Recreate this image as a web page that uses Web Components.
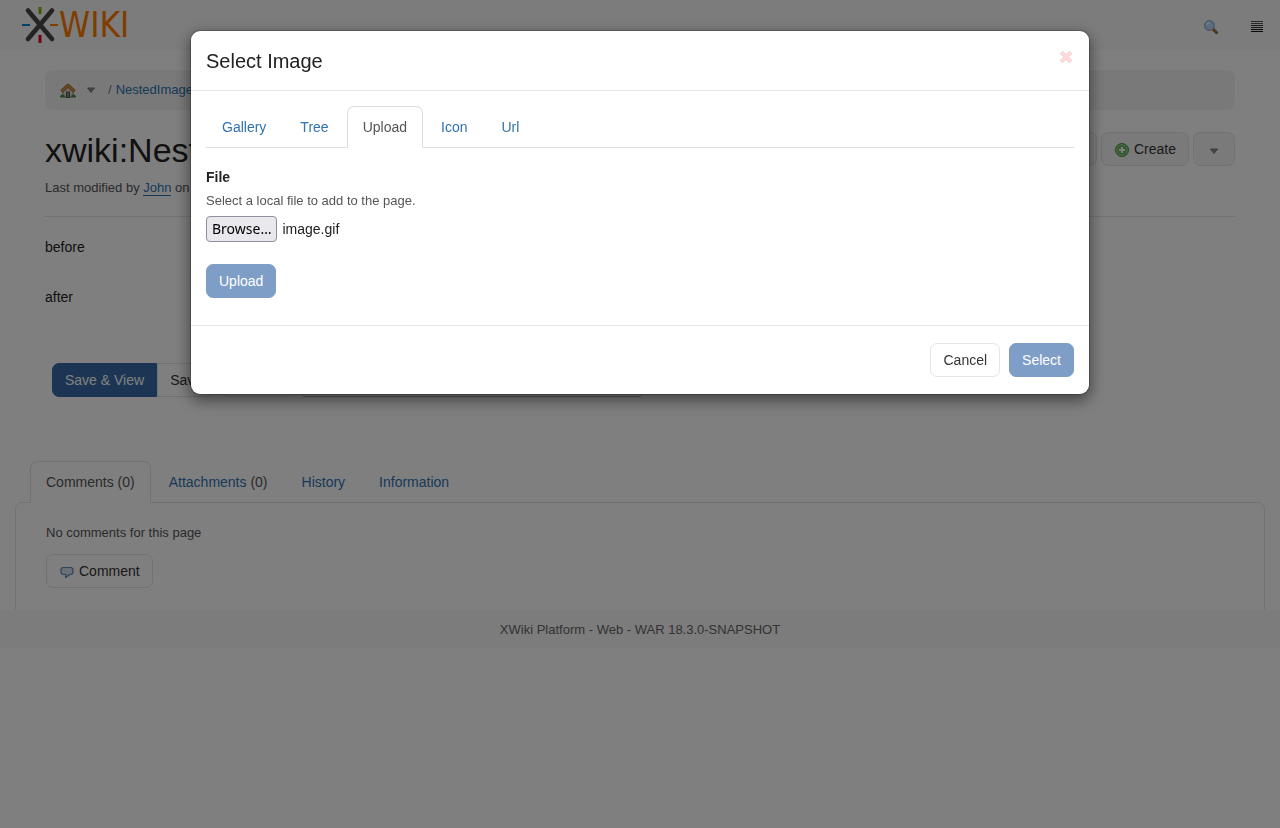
<!DOCTYPE html>
<html lang="en">
<head>
<meta charset="utf-8">
<meta name="viewport" content="width=device-width, initial-scale=1">
<title>Select Image - XWiki</title>
<style>
  :root {
    --text: #222;
    --muted: #555;
    --link: #2f73b1;
    --primary: #3a6ba9;
    --border: #e5e5e5;
  }
  body {
    margin: 0;
    background: #fff;
    color: var(--text);
    font: 14px/20px "Liberation Sans", Arial, sans-serif;
  }
</style>
</head>
<body>
<xwiki-page></xwiki-page>

<script type="module">
const ICONS = {
  search: `<svg width="16" height="16" viewBox="0 0 16 16">
    <path d="M10 10l3.500 3.500" stroke="#8a5a2a" stroke-width="3" stroke-linecap="round"/>
    <path d="M10.800 10.200l3 3" stroke="#e0a868" stroke-width="1"/>
    <circle cx="6.500" cy="6.500" r="4.800" fill="#b9d8f5" stroke="#8ea9cc" stroke-width="1.200"/>
    <path d="M4 6a3 3 0 0 1 3-2.500" stroke="#eef7ff" stroke-width="1.400" fill="none"/></svg>`,
  menu: `<svg width="12" height="12" viewBox="0 0 12 12" shape-rendering="crispEdges">
    <path d="M0 .5h12M0 2.500h12" stroke="#555"/>
    <path d="M0 4.500h12M0 6.500h12" stroke="#333"/>
    <path d="M0 8.500h12M0 10.500h12" stroke="#111"/></svg>`,
  home: `<svg width="16" height="16" viewBox="0 0 16 16">
    <path d="M3 8l5-5 5 5v6H3z" fill="#ddd8cf" stroke="#8d8578"/>
    <path d="M1.500 8.500L8 2.500l6.500 6" fill="none" stroke="#8e5a1b" stroke-width="3.400" stroke-linejoin="round"/>
    <path d="M1.500 8.500L8 2.500l6.500 6" fill="none" stroke="#d59a4c" stroke-width="1.800"/>
    <rect x="6.500" y="9" width="3" height="5.500" fill="#888" stroke="#555"/>
    <path d="M0 14.500q0-3 2.500-3t2.500 3zM11 14.500q0-3 2.500-3t2.500 3z" fill="#4d8a44"/></svg>`,
  caret: `<svg width="10" height="7" viewBox="0 0 10 7">
    <path d="M1.500 1h7L5 5.500z" fill="#909090" stroke="#777" stroke-linejoin="round"/></svg>`,
  add: `<svg width="16" height="16" viewBox="0 0 16 16">
    <circle cx="8" cy="8" r="6.500" fill="#6bb35c" stroke="#4a8f43"/>
    <circle cx="8" cy="8" r="5.300" fill="none" stroke="#a9d6a0"/>
    <path d="M8 5v6M5 8h6" stroke="#fff" stroke-width="2"/></svg>`,
  comment: `<svg width="16" height="16" viewBox="0 0 16 16">
    <path d="M4.500 3.500h7q2.500 0 2.500 2.300v2q0 2.700-3 2.700L6.500 13.500l.5-3H4.500Q2 10.500 2 8V5.800Q2 3.500 4.500 3.500z" fill="#d6e0f0" stroke="#5c86bb" stroke-width="1.200" stroke-linejoin="round"/></svg>`,
  close: `<svg width="16" height="16" viewBox="0 0 16 16">
    <path d="M4.500 4.500l7 7M11.500 4.500l-7 7" stroke="#fad0d0" stroke-width="4" stroke-linecap="square"/>
    <path d="M4.500 4.500l7 7M11.500 4.500l-7 7" stroke="#fcdcdc" stroke-width="2.400" stroke-linecap="square"/></svg>`
};

/** Small helper: open shadow root filled with the given markup. */
class BaseElement extends HTMLElement {
  constructor() {
    super();
    this.attachShadow({mode: "open"}).innerHTML = this.template();
  }
}

class XwIcon extends HTMLElement {
  constructor() {
    super();
    this.attachShadow({mode: "open"});
  }

  connectedCallback() {
    this.shadowRoot.innerHTML = `
    <style>
    :host { display: inline-flex; flex: none; }
    svg { display: block; }
    </style>
    ${ICONS[this.getAttribute("name")] || ""}`;
  }
}
customElements.define("xw-icon", XwIcon);

/** Button with the variants "primary", "toolbar" and the plain default. */
class XwButton extends HTMLElement {
  constructor() {
    super();
    this.attachShadow({mode: "open"});
  }

  connectedCallback() {
    const label = this.getAttribute("label");
    this.shadowRoot.innerHTML = `
    <style>
    :host { display: inline-flex; }
    button {
      display: inline-flex;
      align-items: center;
      gap: 4px;
      min-height: 34px;
      padding: 6px 12px;
      border: 1px solid var(--border);
      border-radius: var(--button-radius, 7px);
      background: #fff;
      color: #333;
      font: inherit;
      white-space: nowrap;
      cursor: pointer;
    }
    :host([variant=primary]) button {
      background: var(--primary);
      border-color: var(--primary);
      color: #fff;
    }
    :host([variant=toolbar]) button { background: #f5f5f5; }
    button:disabled { opacity: .65; cursor: not-allowed; }
    ::slotted(xw-icon) { margin-top: 2px; }
    </style>
    <button type="button" ${this.hasAttribute("disabled") ? "disabled" : ""} ${label ? `aria-label="${label}"` : ""}><slot></slot></button>`;
  }
}
customElements.define("xw-button", XwButton);

class XwTab extends BaseElement {
  template() {
    return `
    <style>
    :host { display: block; margin-bottom: -1px; }
    a {
      display: block;
      padding: 10px 15px;
      border: 1px solid transparent;
      border-radius: 7px 7px 0 0;
      color: var(--link);
      text-decoration: none;
    }
    :host([active]) a {
      border-color: var(--tab-border, #ddd);
      border-bottom-color: #fff;
      background: #fff;
      color: var(--muted);
    }
    ::slotted(span) { color: var(--muted); }
    </style>
    <a href="#"><slot></slot></a>`;
  }
}
customElements.define("xw-tab", XwTab);

class XwTabs extends BaseElement {
  template() {
    return `
    <style>
    :host {
      display: flex;
      gap: 2px;
      border-bottom: 1px solid var(--tab-border, #ddd);
    }
    </style>
    <slot></slot>`;
  }
}
customElements.define("xw-tabs", XwTabs);

class XwLogo extends BaseElement {
  template() {
    return `
    <style>
    a {
      display: flex;
      align-items: center;
      color: #ff7a00;
      font: 35px/36px "DejaVu Sans Condensed", "Liberation Sans", sans-serif;
      text-decoration: none;
    }
    </style>
    <a href="#">
      <svg width="37" height="38" viewBox="0 0 37 38" fill="none" stroke-linecap="round">
        <path d="M6 4.500L30 33M30 4.500L6 33" stroke="#484848" stroke-width="4.600"/>
        <g stroke-width="3" stroke-linecap="butt">
          <path d="M18 1v7" stroke="#7ab800"/>
          <path d="M18 29v8" stroke="#e4002b"/>
          <path d="M0 19h8" stroke="#0085ca" stroke-width="2"/>
          <path d="M28 19h8" stroke="#ff7a00" stroke-width="2"/>
        </g>
      </svg><span>WIKI</span>
    </a>`;
  }
}
customElements.define("xw-logo", XwLogo);

class XwNavbar extends BaseElement {
  template() {
    return `
    <style>
    :host {
      display: flex;
      justify-content: space-between;
      align-items: center;
      height: 50px;
      padding: 0 17px 0 22px;
      box-sizing: border-box;
      background: #f8f8f8;
    }
    nav { display: flex; align-items: center; gap: 32px; padding-top: 4px; }
    nav a { display: flex; }
    </style>
    <xw-logo></xw-logo>
    <nav>
      <a href="#" aria-label="Search"><xw-icon name="search"></xw-icon></a>
      <a href="#" aria-label="Menu"><xw-icon name="menu"></xw-icon></a>
    </nav>`;
  }
}
customElements.define("xw-navbar", XwNavbar);

class XwBreadcrumb extends BaseElement {
  template() {
    return `
    <style>
    nav {
      display: flex;
      align-items: center;
      height: 40px;
      padding: 0 15px;
      border-radius: 7px;
      background: #f3f3f3;
      font-size: 13px;
      line-height: 18px;
    }
    a { color: var(--link); text-decoration: none; }
    a xw-icon { vertical-align: middle; }
    .menu { margin: 0 12px 0 10px; }
    .sep { margin-right: 4px; color: #777; }
    </style>
    <nav aria-label="Breadcrumb">
      <a href="#" aria-label="Home"><xw-icon name="home"></xw-icon></a>
      <a class="menu" href="#" aria-label="Navigate"><xw-icon name="caret"></xw-icon></a>
      <span class="sep">/</span>
      <a href="#"><slot></slot></a>
    </nav>`;
  }
}
customElements.define("xw-breadcrumb", XwBreadcrumb);

/** Edited document: title, toolbar, content and the save bar. */
class XwDocument extends BaseElement {
  template() {
    return `
    <style>
    :host { display: block; padding: 20px 45px 0; }
    header {
      display: flex;
      justify-content: space-between;
      align-items: flex-start;
      margin-top: 22px;
    }
    h1 { margin: 0; font-size: 34px; line-height: 37px; font-weight: 400; }
    .tools { display: flex; gap: 4px; }
    .meta {
      margin: 10px 0 0;
      padding-bottom: 19px;
      border-bottom: 1px solid var(--border);
      color: var(--muted);
      font-size: 13px;
      line-height: 18px;
    }
    .meta a { color: var(--link); text-decoration: none; border-bottom: 1px solid; }
    .content { margin-top: 20px; }
    .content p { margin: 0 0 30px; }
    .save { display: flex; gap: 7px; padding: 26px 7px 0; }
    .group { display: flex; }
    .group :first-child { --button-radius: 7px 0 0 7px; }
    .group :last-child { --button-radius: 0 7px 7px 0; }
    input {
      width: 346px;
      box-sizing: border-box;
      border: 1px solid #bbb;
      border-radius: 7px;
      font: inherit;
    }
    </style>
    <xw-breadcrumb>NestedImage</xw-breadcrumb>
    <header>
      <h1>xwiki:Nest</h1>
      <div class="tools">
        <xw-button variant="toolbar" label="Edit">&nbsp;</xw-button>
        <xw-button variant="toolbar"><xw-icon name="add"></xw-icon>Create</xw-button>
        <xw-button variant="toolbar" label="More actions"><xw-icon style="padding: 2px 3px 0" name="caret"></xw-icon></xw-button>
      </div>
    </header>
    <p class="meta">Last modified by <a href="#">John</a> on</p>
    <div class="content">
      <p>before</p>
      <p>after</p>
    </div>
    <div class="save">
      <div class="group">
        <xw-button variant="primary">Save &amp; View</xw-button>
        <xw-button>Save</xw-button>
      </div>
      <xw-button>Cancel</xw-button>
      <input type="text" aria-label="Version summary">
    </div>`;
  }
}
customElements.define("xw-document", XwDocument);

class XwDocExtra extends BaseElement {
  template() {
    return `
    <style>
    :host { --tab-border: #e5e5e5; display: block; padding: 64px 15px 0; }
    xw-tabs { position: relative; margin: 0 15px; border: 0; }
    section {
      padding: 21px 30px 22px;
      border: 1px solid var(--tab-border);
      border-bottom: 0;
      border-radius: 7px 7px 0 0;
    }
    p { margin: 0 0 12px; color: var(--muted); font-size: 13px; line-height: 18px; }
    section xw-button { display: flex; }
    </style>
    <xw-tabs>
      <xw-tab active>Comments (0)</xw-tab>
      <xw-tab>Attachments <span>(0)</span></xw-tab>
      <xw-tab>History</xw-tab>
      <xw-tab>Information</xw-tab>
    </xw-tabs>
    <section>
      <p>No comments for this page</p>
      <xw-button><xw-icon name="comment"></xw-icon>Comment</xw-button>
    </section>`;
  }
}
customElements.define("xw-doc-extra", XwDocExtra);

class XwFooter extends BaseElement {
  template() {
    return `
    <style>
    :host {
      display: block;
      padding: 11px 10px 9px;
      background: #f8f8f8;
      color: #666;
      font-size: 13px;
      line-height: 18px;
      text-align: center;
    }
    </style>
    <slot></slot>`;
  }
}
customElements.define("xw-footer", XwFooter);

class XwUploadForm extends BaseElement {
  constructor() {
    super();
    this.input = this.shadowRoot.querySelector("input");
    this.name = this.shadowRoot.querySelector("output");

    this.shadowRoot.querySelector("button").addEventListener("click", () => this.input.click());
    this.input.addEventListener("change", () => {
      this.name.textContent = this.input.files[0]?.name ?? "";
    });
  }

  template() {
    return `
    <style>
    :host { display: block; padding: 19px 0 12px; }
    label { display: block; font-weight: 700; }
    p { margin: 5px 0 6px; color: var(--muted); font-size: 13px; line-height: 18px; }
    .file { display: flex; align-items: center; gap: 5px; margin-bottom: 22px; }
    button {
      height: 26px;
      padding: 0 5px;
      border: 1px solid #8f8f9d;
      border-radius: 4px;
      background: #e9e9ed;
      color: #000;
      font: 14px/20px "Noto Sans", sans-serif;
    }
    </style>
    <label for="file">File</label>
    <p>Select a local file to add to the page.</p>
    <div class="file">
      <input id="file" type="file" accept="image/*" hidden>
      <button type="button">Browse…</button>
      <output for="file">image.gif</output>
    </div>
    <xw-button variant="primary" disabled>Upload</xw-button>`;
  }
}
customElements.define("xw-upload-form", XwUploadForm);

class XwModal extends BaseElement {
  template() {
    return `
    <style>
    :host {
      position: fixed;
      inset: 0;
      display: flex;
      justify-content: center;
      align-items: flex-start;
      padding: 30px;
      background: rgba(0, 0, 0, .5);
    }
    .dialog {
      flex: 0 1 900px;
      box-sizing: border-box;
      border: 1px solid rgba(0, 0, 0, .2);
      border-radius: 10px;
      background: #fff;
      background-clip: padding-box;
      box-shadow: 0 5px 15px rgba(0, 0, 0, .5);
    }
    header {
      display: flex;
      justify-content: space-between;
      align-items: flex-start;
      padding: 16px 15px 14px;
      border-bottom: 1px solid var(--border);
    }
    h2 { margin: 0; font-size: 20px; line-height: 29px; font-weight: 400; }
    .close { margin-top: 2px; padding: 0; border: 0; background: none; }
    .body { padding: 15px; }
    footer {
      display: flex;
      justify-content: flex-end;
      gap: 9px;
      padding: 17px 15px;
      border-top: 1px solid var(--border);
    }
    </style>
    <div class="dialog" role="dialog" aria-modal="true" aria-labelledby="title">
      <header>
        <h2 id="title"><slot name="title"></slot></h2>
        <button class="close" type="button" aria-label="Close"><xw-icon name="close"></xw-icon></button>
      </header>
      <div class="body"><slot></slot></div>
      <footer><slot name="footer"></slot></footer>
    </div>`;
  }
}
customElements.define("xw-modal", XwModal);

class XwikiPage extends BaseElement {
  template() {
    return `
    <style>
    :host { display: block; }
    </style>
    <xw-navbar></xw-navbar>
    <xw-document></xw-document>
    <xw-doc-extra></xw-doc-extra>
    <xw-footer>XWiki Platform - Web - WAR 18.3.0-SNAPSHOT</xw-footer>
    <xw-modal>
      <span slot="title">Select Image</span>
      <xw-tabs>
        <xw-tab>Gallery</xw-tab>
        <xw-tab>Tree</xw-tab>
        <xw-tab active>Upload</xw-tab>
        <xw-tab>Icon</xw-tab>
        <xw-tab>Url</xw-tab>
      </xw-tabs>
      <xw-upload-form></xw-upload-form>
      <xw-button slot="footer">Cancel</xw-button>
      <xw-button slot="footer" variant="primary" disabled>Select</xw-button>
    </xw-modal>`;
  }
}
customElements.define("xwiki-page", XwikiPage);
</script>
</body>
</html>
